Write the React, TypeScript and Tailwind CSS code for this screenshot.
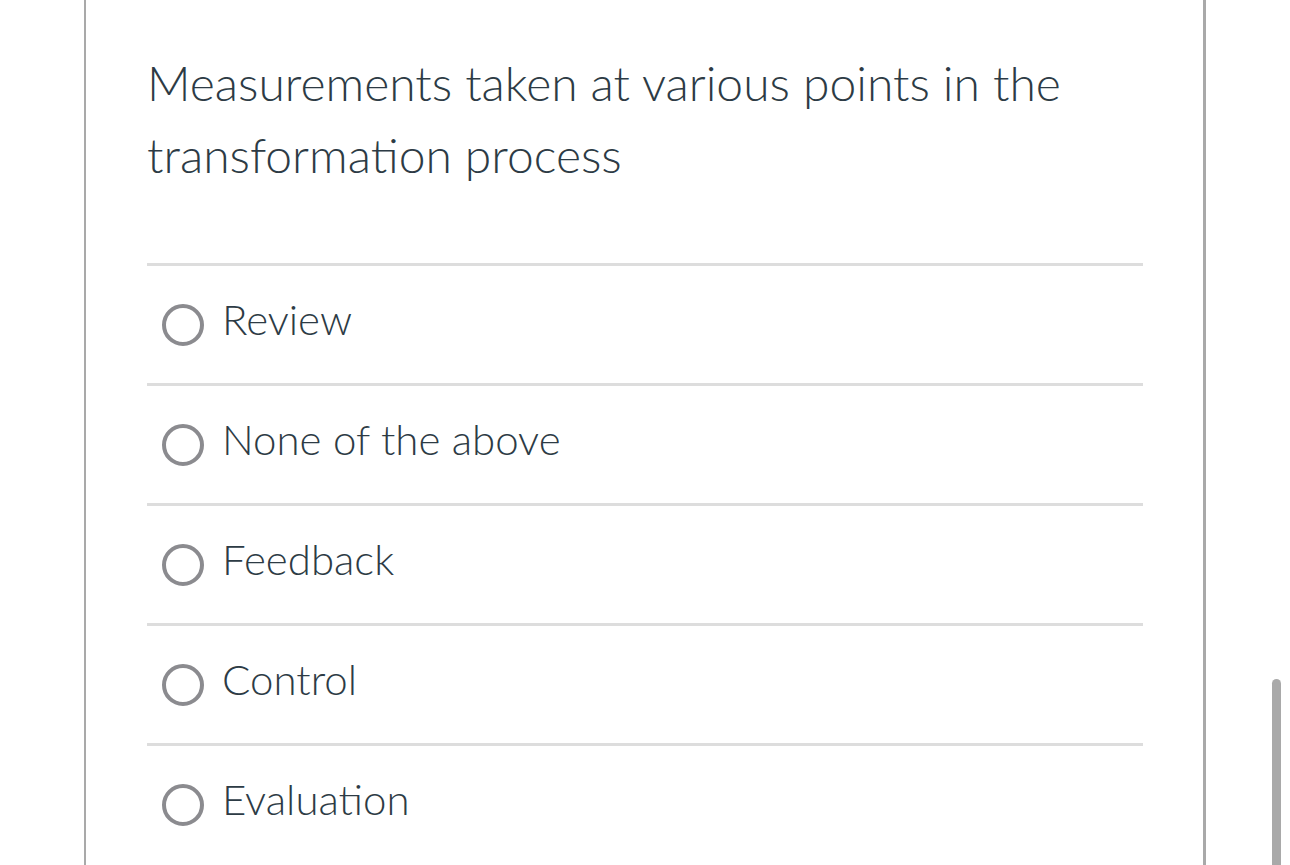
import React from 'react';

const options = ['Review', 'None of the above', 'Feedback', 'Control', 'Evaluation'];

const Radio = () => (
    <div className="w-[42px] h-[42px] rounded-full border-[4px] border-[#8b8b8f] bg-white shrink-0"></div>
);

export default function App() {
    return (
        <div className="relative h-[865px] overflow-hidden bg-white text-[#2d3b45] [font-family:Lato,sans-serif] font-light">
            {/* Question card */}
            <div className="ml-[84px] w-[1122px] h-full border-l-2 border-r-[3px] border-[#a9a9a9] pl-[61px] pr-[60px] pt-[47px]">
                <p className="text-[48px] leading-[72px]">
                    Measurements taken at various points in the transformation process
                </p>

                <div className="mt-[72px]">
                    {options.map((opt) => (
                        <div key={opt} className="border-t-[3px] border-[#dddddd] h-[120px] flex items-center pl-[15px] gap-[18px]">
                            <Radio />
                            <span className="text-[42px] leading-none pb-[11px]">{opt}</span>
                        </div>
                    ))}
                </div>
            </div>

            {/* Scrollbar thumb */}
            <div className="absolute left-[1272px] top-[679px] w-[9px] h-[200px] rounded-full bg-[#a9a9a9]"></div>
        </div>
    );
}
